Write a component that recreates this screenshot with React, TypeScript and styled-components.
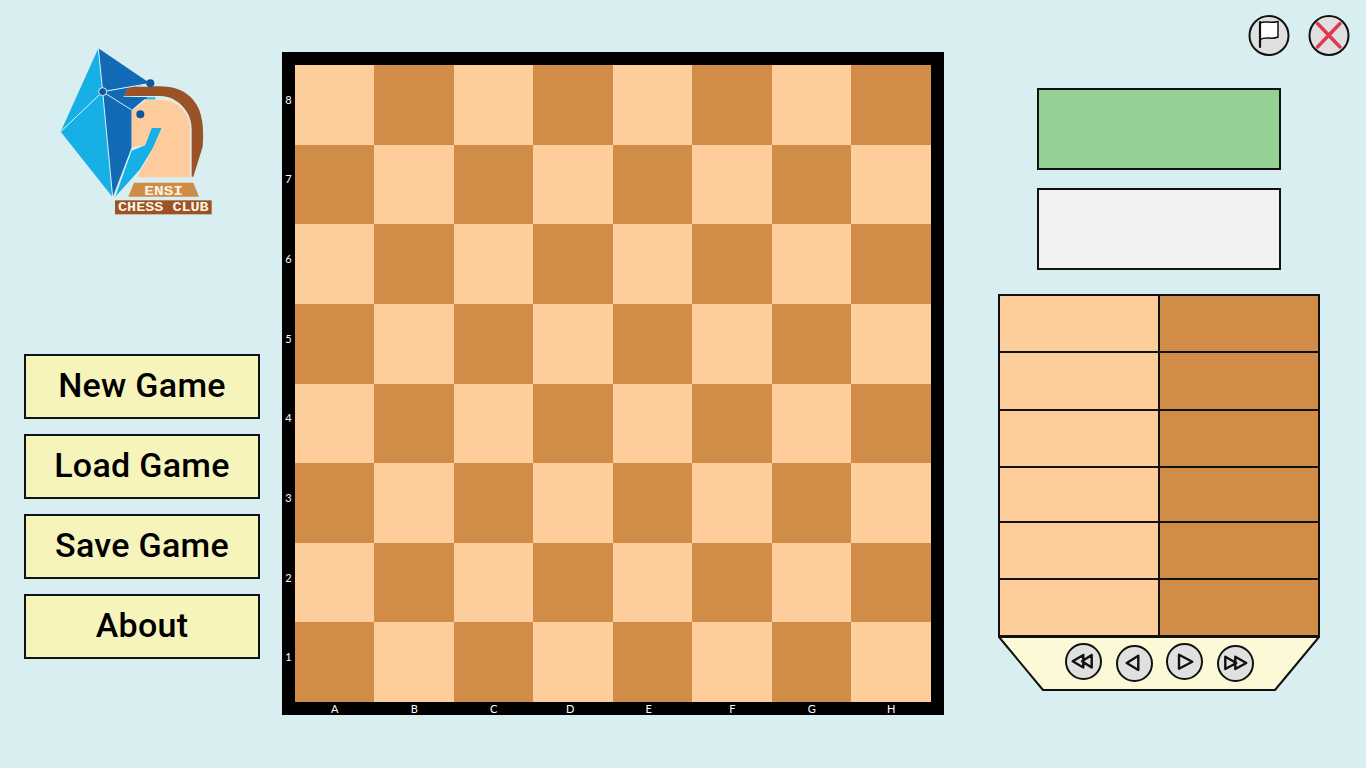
import React from 'react';
import styled, { createGlobalStyle } from 'styled-components';

const GlobalStyle = createGlobalStyle`
  html, body {
    margin: 0;
    padding: 0;
    background: #d8eef1;
  }
`;

const Page = styled.div`
  display: flex;
  width: 1366px;
  height: 768px;
  overflow: hidden;
  background: #d8eef1;
  font-family: 'Lato', 'Liberation Sans', sans-serif;
`;

const LeftColumn = styled.aside`
  display: flex;
  flex-direction: column;
  width: 236px;
  margin: 0 22px 0 24px;
  padding-top: 40px;
`;

const Logo = styled.svg`
  display: block;
  width: 170px;
  height: 180px;
  margin: 0 0 134px 26px;
`;

const Menu = styled.nav`
  display: flex;
  flex-direction: column;
  gap: 15px;
`;

const MenuButton = styled.button`
  width: 236px;
  height: 65px;
  padding: 0 0 4px;
  box-sizing: border-box;
  background: #f6f4ba;
  border: 2px solid #111;
  color: #000;
  font-family: 'Roboto', 'Liberation Sans', sans-serif;
  font-size: 34px;
  font-weight: 500;
  letter-spacing: 0.3px;
  cursor: pointer;
`;

const BoardFrame = styled.section`
  display: grid;
  grid-template-columns: 13px 636px 13px;
  grid-template-rows: 13px 637px 13px;
  flex: none;
  width: 662px;
  height: 663px;
  margin-top: 52px;
  background: #000;
`;

const Ranks = styled.div`
  grid-column: 1;
  grid-row: 2;
  display: grid;
  grid-template-rows: repeat(8, 1fr);
`;

const RankLabel = styled.span`
  display: flex;
  align-items: center;
  justify-content: center;
  padding-bottom: 11px;
  color: #fff;
  font-size: 11px;
  line-height: 1;
`;

const Squares = styled.div`
  grid-column: 2;
  grid-row: 2;
  display: grid;
  grid-template-columns: repeat(8, 79.45px);
  grid-template-rows: repeat(8, 1fr);
`;

const Square = styled.div<{ $dark: boolean }>`
  background: ${props => (props.$dark ? '#d18c47' : '#fdcd9b')};
`;

const Files = styled.div`
  grid-column: 2;
  grid-row: 3;
  display: grid;
  grid-template-columns: repeat(8, 1fr);
`;

const FileLabel = styled.span<{ $shift: number }>`
  color: #fff;
  font-size: 11px;
  line-height: 13px;
  text-align: center;
  transform: translateX(${props => props.$shift}px);
`;

const RightColumn = styled.aside`
  display: flex;
  flex-direction: column;
  flex: 1;
  padding-top: 15px;
`;

const TopActions = styled.div`
  display: flex;
  justify-content: flex-end;
  gap: 18px;
  padding-right: 16px;
  margin-bottom: 31px;
`;

const RoundIcon = styled.svg`
  display: block;
  width: 42px;
  height: 42px;
`;

const PlayerBox = styled.div<{ $color: string }>`
  width: 244px;
  height: 82px;
  box-sizing: border-box;
  margin: 0 0 18px 93px;
  background: ${props => props.$color};
  border: 2px solid #111;
`;

const MovesBlock = styled.div`
  position: relative;
  width: 322px;
  margin: 6px 0 0 54px;
`;

const MovesTable = styled.div`
  display: grid;
  grid-template-columns: 158px 1fr;
  grid-template-rows: 57px 58px 57px 55px 57px 1fr;
  box-sizing: border-box;
  height: 343px;
  border: 2px solid #111;
`;

const MoveCell = styled.div<{ $dark: boolean; $last: boolean }>`
  background: ${props => (props.$dark ? '#d18c47' : '#fdcd9b')};
  border-left: ${props => (props.$dark ? '2px solid #111' : 'none')};
  border-bottom: ${props => (props.$last ? 'none' : '2px solid #111')};
`;

const Tray = styled.div`
  position: relative;
  height: 54px;
  margin-top: -1px;
`;

const TrayShape = styled.svg`
  position: absolute;
  top: 0;
  left: 0;
  width: 322px;
  height: 56px;
`;

const TrayButtons = styled.div`
  position: relative;
  display: flex;
  gap: 13.5px;
  padding: 7px 0 0 67px;
`;

const NavButton = styled.svg<{ $low: boolean }>`
  display: block;
  flex: none;
  width: 37px;
  height: 37px;
  margin-top: ${props => (props.$low ? '2px' : '0')};
`;

const files = ['A', 'B', 'C', 'D', 'E', 'F', 'G', 'H'];
const fileShifts = [0, 0, 0, -3, -4, 0, 0, 0];
const ranks = [8, 7, 6, 5, 4, 3, 2, 1];
const moveRows = [0, 1, 2, 3, 4, 5];

const navIcons = [
  'M18.3 12 L7.7 18.3 L18.3 24.5 Z M26.7 12 L17 18.3 L26.7 24.5 Z',
  'M22.3 10.7 L10.7 18 L22.3 25 Z',
  'M13 11.7 L26.3 18.7 L13 25.7 Z',
  'M8.3 11.7 L19.3 18 L8.3 24 Z M18.3 11.7 L29.3 18 L18.3 24 Z',
];

const ChessLogo = () => (
  <Logo viewBox="0 0 510 540">
    <path d="M145 25 L158 155 L32 275 Z" fill="#17b0e6" />
    <path d="M32 275 L158 155 L188 472 Z" fill="#17b0e6" />
    <path d="M145 25 L300 130 L158 155 Z" fill="#1269b5" />
    <path d="M158 155 L300 130 L235 145 L220 170 L290 172 L245 210 L245 322 L188 472 Z" fill="#1269b5" />
    <path d="M196 470 L245 332 L285 316 L305 264 L335 264 L310 322 L270 388 Z" fill="#17b0e6" />
    <path
      d="M245 212 L290 180 L345 180 C395 185 420 225 420 270 L420 412 L262 412 C280 375 300 350 335 264 L305 264 L285 316 L245 322 Z"
      fill="#fdcb9c"
    />
    <path
      d="M220 168 L238 140 L300 140 C360 135 400 145 430 180 C460 215 462 270 458 320 L430 410 L420 410 L420 270 C420 225 395 170 330 168 Z"
      fill="#9a5226"
    />
    <path d="M318 177 L345 178 C395 183 422 225 422 270 L422 412" fill="none" stroke="#e6e9df" strokeWidth="6" />
    <path d="M222 172 L292 172 L292 178 L226 178 Z" fill="#1269b5" />
    <path d="M292 172 L316 172 L316 178 L292 178 Z" fill="#17b0e6" />
    <g stroke="#d8eef1" strokeWidth="3" fill="none">
      <path d="M145 25 L158 155 L188 472" />
      <path d="M32 275 L158 155 L300 130" />
      <path d="M158 155 L245 210" />
    </g>
    <circle cx="158" cy="155" r="12" fill="#0d5a9c" stroke="#d8eef1" strokeWidth="3" />
    <circle cx="301" cy="130" r="12" fill="#0d5a9c" />
    <circle cx="271" cy="223" r="12" fill="#0d5a9c" />
    <path d="M252 428 L430 428 L447 470 L235 470 Z" fill="#cf8c47" />
    <text
      x="341"
      y="464"
      textAnchor="middle"
      textLength="116"
      lengthAdjust="spacingAndGlyphs"
      fill="#fdf3e2"
      fontFamily="'Liberation Mono', monospace"
      fontSize="40"
      fontWeight="700"
    >
      ENSI
    </text>
    <rect x="195" y="481" width="290" height="42" fill="#9a5226" />
    <text
      x="340"
      y="514"
      textAnchor="middle"
      textLength="272"
      lengthAdjust="spacingAndGlyphs"
      fill="#fdf3e2"
      fontFamily="'Liberation Mono', monospace"
      fontSize="36"
      fontWeight="700"
    >
      CHESS CLUB
    </text>
  </Logo>
);

const App: React.FC = () => (
  <Page>
    <GlobalStyle />
    <LeftColumn>
      <ChessLogo />
      <Menu>
        <MenuButton>New Game</MenuButton>
        <MenuButton>Load Game</MenuButton>
        <MenuButton>Save Game</MenuButton>
        <MenuButton>About</MenuButton>
      </Menu>
    </LeftColumn>

    <BoardFrame>
      <Ranks>
        {ranks.map(rank => (
          <RankLabel key={rank}>{rank}</RankLabel>
        ))}
      </Ranks>
      <Squares>
        {ranks.map((rank, r) =>
          files.map((file, f) => <Square key={file + rank} $dark={(r + f) % 2 === 1} />)
        )}
      </Squares>
      <Files>
        {files.map((file, f) => (
          <FileLabel key={file} $shift={fileShifts[f]}>
            {file}
          </FileLabel>
        ))}
      </Files>
    </BoardFrame>

    <RightColumn>
      <TopActions>
        <RoundIcon viewBox="0 0 42 42">
          <circle cx="21" cy="20.5" r="19.5" fill="#e0e0e0" stroke="#111" strokeWidth="2" />
          <path d="M12 8 C17 5 22 9 30 6.5 L30 22 C24 25 18 21 12 24.5 Z" fill="#fff" stroke="#111" strokeWidth="1.5" />
          <path d="M12 7 L12 32" stroke="#111" strokeWidth="2.2" strokeLinecap="round" />
        </RoundIcon>
        <RoundIcon viewBox="0 0 42 42">
          <circle cx="21" cy="20.5" r="19.5" fill="#e0e0e0" stroke="#111" strokeWidth="2" />
          <path d="M9.5 8.5 L32 32 M32 8.5 L9.5 32" stroke="#e0394f" strokeWidth="3.5" strokeLinecap="round" />
        </RoundIcon>
      </TopActions>

      <PlayerBox $color="#95d195" />
      <PlayerBox $color="#f2f2f2" />

      <MovesBlock>
        <MovesTable>
          {moveRows.map(row => (
            <React.Fragment key={row}>
              <MoveCell $dark={false} $last={row === 5} />
              <MoveCell $dark $last={row === 5} />
            </React.Fragment>
          ))}
        </MovesTable>
        <Tray>
          <TrayShape viewBox="0 0 322 56">
            <path d="M1 1 L45 54 L277 54 L321 1 Z" fill="#fcfad6" stroke="#111" strokeWidth="2" strokeLinejoin="round" />
          </TrayShape>
          <TrayButtons>
            {navIcons.map((d, i) => (
              <NavButton key={d} viewBox="0 0 37 37" $low={i % 2 === 1}>
                <circle cx="18.5" cy="18.5" r="17.5" fill="#e0e0e0" stroke="#111" strokeWidth="2" />
                <path d={d} fill="none" stroke="#111" strokeWidth="2.4" strokeLinejoin="round" />
              </NavButton>
            ))}
          </TrayButtons>
        </Tray>
      </MovesBlock>
    </RightColumn>
  </Page>
);

export default App;
